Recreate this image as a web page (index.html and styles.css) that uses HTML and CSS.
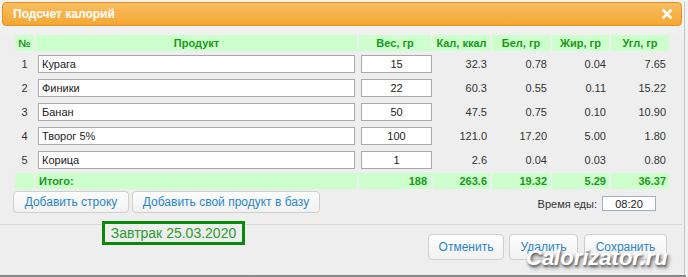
FILE: index.html
```html
<!DOCTYPE html>
<html lang="ru">
<head>
<meta charset="utf-8">
<title>Подсчет калорий</title>
<link rel="stylesheet" href="styles.css">
</head>
<body>
<div class="dialog">
  <div class="titlebar">
    <span class="title">Подсчет калорий</span>
    <svg class="close" width="10" height="10" viewBox="0 0 10 10"><path d="M1.5 1.5 L8.5 8.5 M8.5 1.5 L1.5 8.5" stroke="#fff" stroke-width="2.6" stroke-linecap="square"/></svg>
  </div>
  <table class="calc">
    <thead>
      <tr>
        <th class="c-n">№</th>
        <th class="c-prod">Продукт</th>
        <th class="c-w">Вес, гр</th>
        <th class="c-k">Кал, ккал</th>
        <th class="c-b">Бел, гр</th>
        <th class="c-f">Жир, гр</th>
        <th class="c-u">Угл, гр</th>
      </tr>
    </thead>
    <tbody>
      <tr><td class="idx">1</td><td><input class="prod" value="Курага"></td><td><input class="weight" value="15"></td><td class="num">32.3</td><td class="num">0.78</td><td class="num">0.04</td><td class="num">7.65</td></tr>
      <tr><td class="idx">2</td><td><input class="prod" value="Финики"></td><td><input class="weight" value="22"></td><td class="num">60.3</td><td class="num">0.55</td><td class="num">0.11</td><td class="num">15.22</td></tr>
      <tr><td class="idx">3</td><td><input class="prod" value="Банан"></td><td><input class="weight" value="50"></td><td class="num">47.5</td><td class="num">0.75</td><td class="num">0.10</td><td class="num">10.90</td></tr>
      <tr><td class="idx">4</td><td><input class="prod" value="Творог 5%"></td><td><input class="weight" value="100"></td><td class="num">121.0</td><td class="num">17.20</td><td class="num">5.00</td><td class="num">1.80</td></tr>
      <tr><td class="idx">5</td><td><input class="prod" value="Корица"></td><td><input class="weight" value="1"></td><td class="num">2.6</td><td class="num">0.04</td><td class="num">0.03</td><td class="num">0.80</td></tr>
    </tbody>
    <tfoot>
      <tr class="total"><td></td><td class="tlabel">Итого:</td><td class="tnum tw">188</td><td class="tnum">263.6</td><td class="tnum">19.32</td><td class="tnum">5.29</td><td class="tnum">36.37</td></tr>
    </tfoot>
  </table>
  <div class="actions">
    <button class="btn btn-add">Добавить строку</button>
    <button class="btn btn-own">Добавить свой продукт в базу</button>
    <label class="time">Время еды: <input class="time-input" value="08:20"></label>
  </div>
  <div class="sep"></div>
  <div class="footer">
    <button class="btn fbtn f-cancel">Отменить</button>
    <button class="btn fbtn f-del">Удалить</button>
    <button class="btn fbtn f-save">Сохранить</button>
  </div>
  <div class="note">Завтрак 25.03.2020</div>
  <div class="watermark">Calorizator.ru</div>
</div>
<div class="shade"></div>
</body>
</html>
```

FILE: styles.css
```css
html, body {
  margin: 0;
  padding: 0;
}
body {
  background: #f2f2f2;
  font-family: "Liberation Sans", Arial, sans-serif;
  font-size: 11px;
  color: #333;
  width: 688px;
  height: 277px;
  overflow: hidden;
}
.dialog {
  position: relative;
  width: 684px;
  height: 273px;
  border-right: 1px solid #c4c4c4;
  background: linear-gradient(#f7f7f7 0, #eeeeee 40px, #eeeeee 100%);
}
.titlebar {
  margin: 2px 2px 0 2px;
  height: 22px;
  border: 1px solid #e4921c;
  border-radius: 4px;
  background: linear-gradient(#f9bd60, #f5a733);
  display: flex;
  align-items: center;
  justify-content: space-between;
  padding: 0 9px 0 10px;
}
.title {
  color: #fff;
  font-weight: bold;
  font-size: 12px;
}
.close {
  display: block;
}
.calc {
  margin: 7px 0 0 13px;
  border-collapse: separate;
  border-spacing: 2px;
  table-layout: fixed;
  width: 658px;
}
.calc th {
  background: #ccffcc;
  color: #1b991b;
  font-weight: bold;
  font-size: 11px;
  height: 16px;
  padding: 0;
  text-align: center;
}
.c-n { width: 19px; }
.c-prod { width: 321px; }
.c-w { width: 72px; }
.c-k { width: 57px; }
.c-b { width: 58px; }
.c-f { width: 57px; }
.c-u { width: 58px; }
.calc td {
  height: 22px;
  padding: 0;
}
.idx {
  text-align: center;
  color: #333;
}
.num {
  text-align: right;
  padding-right: 3px !important;
  color: #333;
}
input {
  font-family: "Liberation Sans", Arial, sans-serif;
  font-size: 11px;
  color: #222;
  box-sizing: border-box;
  border: 1px solid #a9a9a9;
  background: #fff;
  height: 18px;
  margin: 0;
  display: block;
  outline: none;
}
.prod {
  width: 317px;
  margin-left: 2px;
  padding: 0 3px;
}
.weight {
  width: 71px;
  margin-left: 2px;
  text-align: center;
  padding: 0;
}
.calc tr.total td {
  background: #ccffcc;
  color: #1b991b;
  font-weight: bold;
  height: 16px;
}
.tlabel {
  padding-left: 3px !important;
}
.tnum {
  text-align: right;
  padding-right: 3px !important;
}
.tw {
  padding-right: 4px !important;
}
.actions {
  display: flex;
  align-items: flex-start;
  margin: 0 28px 0 13px;
  height: 22px;
}
.btn {
  font-family: "Liberation Sans", Arial, sans-serif;
  font-size: 12px;
  color: #2a86c6;
  background: linear-gradient(#fdfdfd, #f1f1f1);
  border: 1px solid #cfcfcf;
  border-radius: 4px;
  height: 22px;
  padding: 0;
  margin: 0;
  cursor: pointer;
}
.btn-add {
  width: 116px;
}
.btn-own {
  width: 188px;
  margin-left: 3px;
}
.time {
  margin-left: auto;
  margin-top: 5px;
  display: flex;
  align-items: center;
  gap: 5px;
  color: #333;
  font-size: 11px;
}
.time-input {
  width: 54px;
  height: 15px;
  text-align: center;
  border: 1px solid #9fb0c4;
  padding: 0;
}
.sep {
  margin: 11px 2px 0 0;
  height: 1px;
  background: #d9d9d9;
}
.footer {
  display: flex;
  justify-content: flex-end;
  gap: 5px;
  margin: 9px 17px 0 0;
}
.fbtn {
  height: 26px;
}
.f-cancel { width: 76px; }
.f-del { width: 69px; }
.f-save { width: 83px; margin-left: 1px; }
.note {
  position: absolute;
  left: 102px;
  top: 219px;
  width: 137px;
  height: 18px;
  border: 3px solid #0a8a0a;
  background: #eeeeee;
  color: #2c9a2c;
  font-size: 14px;
  line-height: 18px;
  text-align: center;
}
.watermark {
  position: absolute;
  left: 526px;
  top: 243px;
  font-family: "Liberation Sans", Arial, sans-serif;
  font-size: 22px;
  font-weight: bold;
  font-style: italic;
  color: #fff;
  text-shadow: 1px 2px 2px #6a6a6a, 2px 3px 4px #888;
  letter-spacing: 0;
}
.shade {
  height: 4px;
  width: 686px;
  background: linear-gradient(#7d7d7d, #a8a8a8);
}
```
